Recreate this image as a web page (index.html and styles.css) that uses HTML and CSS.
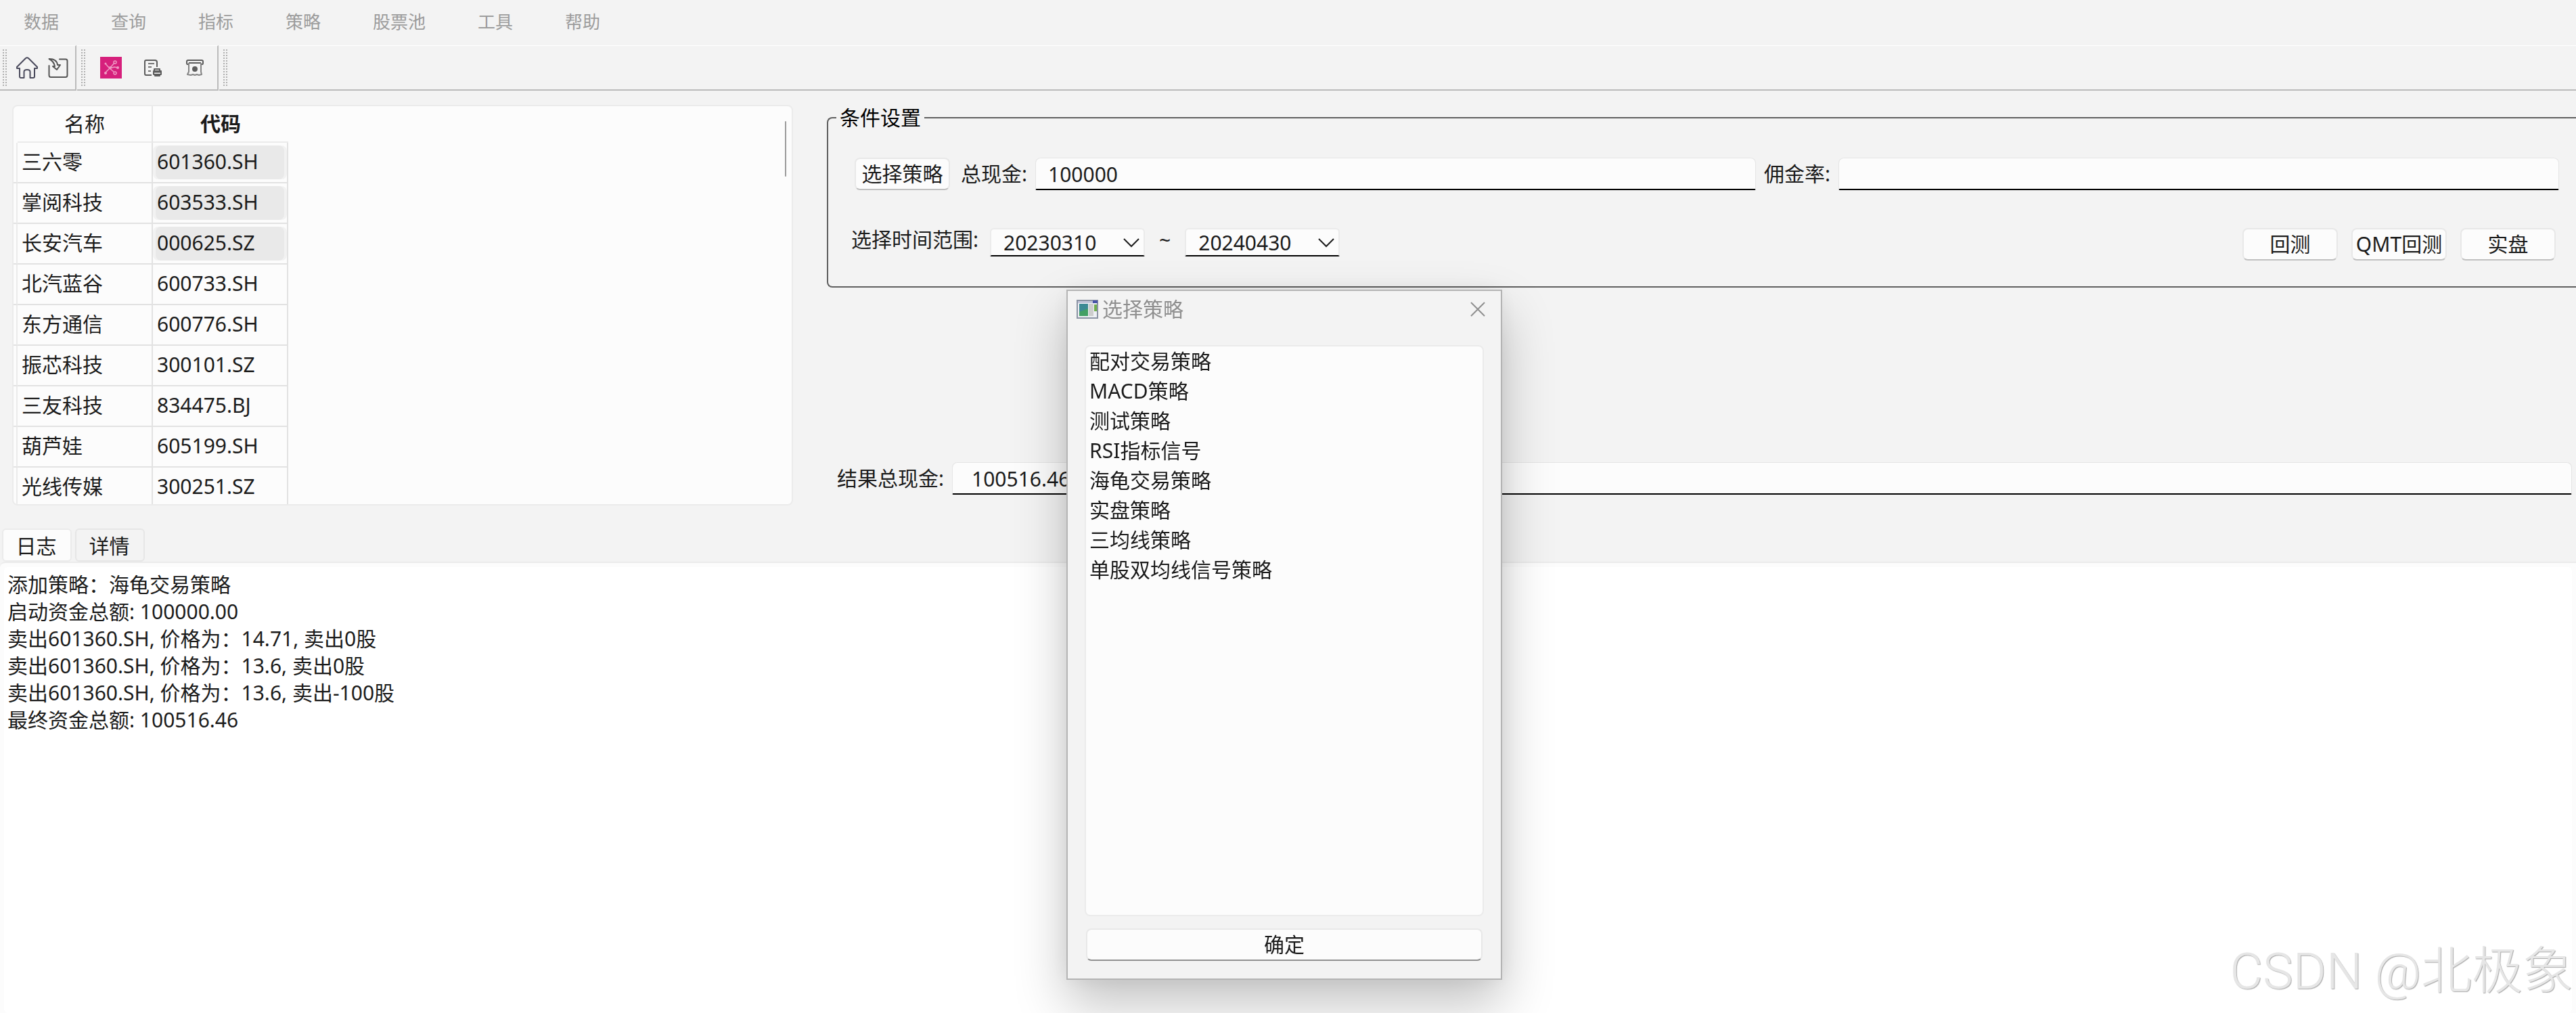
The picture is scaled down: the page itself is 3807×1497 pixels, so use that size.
FILE: index.html
```html
<!DOCTYPE html>
<html lang="zh-CN">
<head>
    <meta charset="UTF-8">
    <meta name="viewport" content="width=device-width, initial-scale=1.0">
    <title>选择策略</title>
    <link rel="stylesheet" href="styles.css">
</head>
<body>
    <nav class="menubar">
        <a href="#">数据</a>
        <a href="#">查询</a>
        <a href="#">指标</a>
        <a href="#">策略</a>
        <a href="#">股票池</a>
        <a href="#">工具</a>
        <a href="#">帮助</a>
    </nav>

    <div class="toolbars">
        <div class="toolbar toolbar-home">
            <span class="handle"></span>
            <button class="tool" aria-label="主页">
                <svg viewBox="0 0 32 32" fill="none" stroke="#4a4a5c" stroke-width="2" stroke-linejoin="round">
                    <path d="M1 15 L14 2 Q16 0.500 18 2 L31 15 V17 H27 V29 Q27 31 25 31 H20.500 V22 Q20.500 19 16 19 Q11.500 19 11.500 22 V31 H7 Q5 31 5 29 V17 H1 Z"/>
                </svg>
            </button>
            <button class="tool" aria-label="导入">
                <svg viewBox="0 0 32 32" fill="none" stroke="#555" stroke-width="2" stroke-linejoin="round" stroke-linecap="round">
                    <path d="M18 3.500 H27 Q29.500 3.500 29.500 6 V27 Q29.500 30 27 30 H5 Q2.500 30 2.500 27 V13"/>
                    <path d="M2.500 3 Q14 3 15 12 H19 L14 19 L8 14 H11 Q10 7 2.500 3 Z"/>
                </svg>
            </button>
        </div>
        <div class="toolbar toolbar-strategy">
            <span class="handle"></span>
            <button class="tool" aria-label="策略网络">
                <svg viewBox="0 0 32 32">
                    <rect width="32" height="32" fill="#d6207c"/>
                    <g stroke="#ef9cc5" stroke-width="1.500" fill="none">
                        <path d="M8 23 L14 17 L8.500 11 M14 17 L21 9 M14 17 L21 15 L26 16 M14 17 L20 22"/>
                        <circle cx="22" cy="8" r="2"/>
                        <circle cx="22" cy="24" r="2"/>
                    </g>
                    <g fill="#ef9cc5">
                        <circle cx="8" cy="24" r="2"/>
                        <circle cx="8" cy="10" r="1.500"/>
                        <circle cx="26" cy="16" r="2"/>
                        <circle cx="15" cy="16" r="2"/>
                    </g>
                </svg>
            </button>
            <button class="tool" aria-label="打印单据">
                <svg viewBox="0 0 32 32" fill="none" stroke="#5c5c5c" stroke-width="2" stroke-linejoin="round">
                    <path d="M14 27 H6 Q4 27 4 25 V7 Q4 5 6 5 H19 Q22 5 22 8 V15"/>
                    <path d="M9 10 H18 M9 15 H14 M9 21 H13" stroke="#757575"/>
                    <path d="M18 20 V18 H26 V20 M17 21 H28 V26 H17 Z M19 26 H26 V28 H19 Z"/>
                    <path d="M17 22 H28" stroke-width="3"/>
                </svg>
            </button>
            <button class="tool" aria-label="取款">
                <svg viewBox="0 0 32 32" fill="none" stroke="#5c5c5c" stroke-width="2" stroke-linejoin="round">
                    <path d="M7 11 H5 Q4 11 4 9 V7 Q4 5 6 5 H26 Q28 5 28 7 V9 Q28 11 27 11 H25"/>
                    <path d="M7 9 H25"/>
                    <path d="M7 9 V22 L5 26 L10 27 L13 26 L16 27 L19 26 L22 27 L26 26 L25 22 V9" stroke="#858585"/>
                    <circle cx="16" cy="18" r="3" fill="#5c5c5c"/>
                </svg>
            </button>
        </div>
        <div class="toolbar toolbar-empty">
            <span class="handle"></span>
        </div>
    </div>

    <main class="workspace">
        <section class="stocks">
            <table>
                <thead>
                    <tr><th class="stub"></th><th class="name">名称</th><th class="current">代码</th></tr>
                </thead>
                <tbody>
                    <tr><td class="stub"></td><td>三六零</td><td class="selected"><span>601360.SH</span></td></tr>
                    <tr><td class="stub"></td><td>掌阅科技</td><td class="selected"><span>603533.SH</span></td></tr>
                    <tr><td class="stub"></td><td>长安汽车</td><td class="selected"><span>000625.SZ</span></td></tr>
                    <tr><td class="stub"></td><td>北汽蓝谷</td><td>600733.SH</td></tr>
                    <tr><td class="stub"></td><td>东方通信</td><td>600776.SH</td></tr>
                    <tr><td class="stub"></td><td>振芯科技</td><td>300101.SZ</td></tr>
                    <tr><td class="stub"></td><td>三友科技</td><td>834475.BJ</td></tr>
                    <tr><td class="stub"></td><td>葫芦娃</td><td>605199.SH</td></tr>
                    <tr><td class="stub"></td><td>光线传媒</td><td>300251.SZ</td></tr>
                </tbody>
            </table>
            <div class="scroll-thumb"></div>
        </section>

        <section class="backtest">
            <fieldset>
                <legend>条件设置</legend>
                <div class="row row-cash">
                    <button class="btn">选择策略</button>
                    <label for="cash">总现金:</label>
                    <input type="text" id="cash" value="100000">
                    <label for="fee">佣金率:</label>
                    <input type="text" id="fee">
                </div>
                <div class="row row-range">
                    <label for="start">选择时间范围:</label>
                    <div class="combo">
                        <select id="start"><option>20230310</option></select>
                        <svg viewBox="0 0 24 14"><path d="M1 1 L12 12 L23 1" fill="none" stroke="#1b1b1b" stroke-width="2"/></svg>
                    </div>
                    <span class="tilde">~</span>
                    <div class="combo">
                        <select id="end" aria-label="结束时间"><option>20240430</option></select>
                        <svg viewBox="0 0 24 14"><path d="M1 1 L12 12 L23 1" fill="none" stroke="#1b1b1b" stroke-width="2"/></svg>
                    </div>
                    <div class="actions">
                        <button class="btn">回测</button>
                        <button class="btn">QMT回测</button>
                        <button class="btn">实盘</button>
                    </div>
                </div>
            </fieldset>
            <div class="row row-result">
                <label for="result">结果总现金:</label>
                <input type="text" id="result" value="100516.46">
            </div>
        </section>
    </main>

    <div class="tabs" role="tablist">
        <button class="tab active" role="tab">日志</button>
        <button class="tab" role="tab">详情</button>
    </div>
    <section class="log-pane">
        <div class="log">
            <p>添加策略：海龟交易策略</p>
            <p>启动资金总额: 100000.00</p>
            <p>卖出601360.SH, 价格为：14.71, 卖出0股</p>
            <p>卖出601360.SH, 价格为：13.6, 卖出0股</p>
            <p>卖出601360.SH, 价格为：13.6, 卖出-100股</p>
            <p>最终资金总额: 100516.46</p>
        </div>
    </section>

    <div class="dialog" role="dialog" aria-labelledby="dialog-title">
        <div class="titlebar">
            <svg class="app-icon" viewBox="0 0 32 28">
                <rect x="1" y="1" width="30" height="26" fill="#eef0f4" stroke="#8b93a3" stroke-width="2"/>
                <rect x="2" y="2" width="22" height="3" fill="#c4c6da"/>
                <rect x="24" y="1" width="7" height="4" fill="#4854a8"/>
                <rect x="4" y="6" width="13" height="18" fill="#3d8a94"/>
                <path d="M4 24 V18 L17 13 V24 Z" fill="#43a064"/>
                <rect x="18" y="6" width="7" height="18" fill="#cdcdcd"/>
                <rect x="26" y="7" width="4" height="10" fill="#6fae4e"/>
            </svg>
            <h2 id="dialog-title">选择策略</h2>
            <button class="close" aria-label="关闭">
                <svg viewBox="0 0 22 22"><path d="M1 1 L21 21 M21 1 L1 21" stroke="#8f8f8f" stroke-width="2"/></svg>
            </button>
        </div>
        <ul class="strategies">
            <li>配对交易策略</li>
            <li>MACD策略</li>
            <li>测试策略</li>
            <li>RSI指标信号</li>
            <li>海龟交易策略</li>
            <li>实盘策略</li>
            <li>三均线策略</li>
            <li>单股双均线信号策略</li>
        </ul>
        <button class="btn confirm">确定</button>
    </div>

    <div class="watermark">CSDN @北极象</div>
</body>
</html>
```

FILE: styles.css
```css
* { box-sizing: border-box; }
body { margin: 0; min-height: 100vh; display: flex; flex-direction: column; overflow: hidden; background: #f3f3f3; color: #1b1b1b; font-family: "Noto Sans", "Noto Sans CJK SC", sans-serif; font-size: 30px; line-height: 40px; }
button, input, select { font: inherit; color: inherit; margin: 0; }
label { white-space: nowrap; }

/* menu and toolbars */
.menubar { display: flex; gap: 77px; height: 67px; padding: 12px 35px 0; }
.menubar a { color: #9c9c9c; font-size: 26px; text-decoration: none; }
.toolbars { display: flex; height: 67px; }
.toolbar { display: flex; align-items: center; border-top: 1px solid #fff; border-bottom: 2px solid #bbb; border-right: 2px solid #bbb; padding-left: 4px; margin-right: 1px; }
.toolbar-home { width: 113px; }
.toolbar-strategy { width: 209px; padding-left: 6px; }
.toolbar-empty { flex: 1; margin-right: 0; border-right: none; padding-left: 6px; }
.handle { width: 6px; height: 54px; background: radial-gradient(circle at 1px 1px, #b0b0b0 1px, transparent 1px) 0 0 / 4px 4px; }
.tool { width: 32px; height: 32px; padding: 0; border: none; background: none; cursor: pointer; }
.tool svg { display: block; width: 32px; height: 32px; }
.toolbar-home .tool { margin-left: 14px; }
.toolbar-strategy .tool { margin-left: 20px; }
.toolbar-strategy .handle + .tool { margin-left: 22px; }
.toolbar-strategy .tool + .tool { margin-left: 30px; }

/* stock list */
.workspace { display: grid; grid-template-columns: 100fr 224fr; gap: 50px; padding: 21px 0 0 18px; }
.stocks { position: relative; height: 592px; overflow: hidden; background: #fcfcfc; border: 2px solid #ebebeb; border-radius: 8px; }
.stocks table { width: 406px; table-layout: fixed; border-collapse: separate; border-spacing: 0; }
.stocks th { height: 54px; padding: 0; border-bottom: 2px solid #ebebeb; font-weight: normal; }
.stocks th.name { width: 200px; border-right: 2px solid #e6e6e6; }
.stocks th.current { width: 200px; font-weight: bold; }
.stocks th.stub { width: 6px; border: none; }
.stocks td { height: 60px; padding: 0 0 2px 6px; border-right: 2px solid #e2e2e2; border-bottom: 2px solid #e2e2e2; }
.stocks td.stub { padding: 0; border-right-color: #ebebeb; }
.stocks td.selected { padding: 0 4px; }
.selected span { display: block; height: 50px; line-height: 48px; padding-left: 2px; background: #e9e9e9; border-radius: 8px; box-shadow: -4px 0 0 #f2f2f2, 4px 0 0 #f2f2f2; }
.scroll-thumb { position: absolute; top: 22px; right: 8px; width: 2px; height: 82px; background: #9b9b9b; border-radius: 1px; }

/* backtest form */
fieldset { min-width: 0; margin: 0; padding: 40px 25px 38px 12px; border: 2px solid #5f5f5f; border-right: none; border-radius: 8px 0 0 8px; }
legend { padding: 0 5px; line-height: 38px; color: #000; }
.row { display: flex; }
.row-cash { align-items: center; gap: 12px; padding-left: 27px; }
.row-cash .btn { margin-right: 4px; }
.row-range { align-items: flex-start; margin-top: 56px; padding: 0 5px 0 22px; }
.row-range label { line-height: 34px; margin-right: 17px; }
.row-result { align-items: center; gap: 12px; margin-top: 258px; padding: 0 6px 0 15px; }
input { flex: 1; min-width: 0; height: 48px; padding: 2px 18px 0; background: #fcfcfc; border: 1px solid #e5e5e5; border-bottom: 2px solid #000; border-radius: 8px 8px 2px 2px; }
.row-result input { padding: 2px 28px 0; }
.btn { width: 141px; height: 48px; padding: 0; background: #fcfcfc; border: 2px solid #e8e8e8; border-bottom-color: #c0c0c0; border-radius: 8px; line-height: 44px; white-space: nowrap; cursor: pointer; }
.combo { position: relative; width: 229px; }
.combo select { display: block; width: 100%; height: 42px; padding: 0 18px; appearance: none; background: #fcfcfc; border: 2px solid #ebebeb; border-bottom-color: #000; border-radius: 6px 6px 2px 2px; }
.combo svg { position: absolute; right: 8px; top: 15px; width: 24px; height: 14px; }
.tilde { line-height: 36px; margin: 0 21px; }
.actions { display: flex; gap: 20px; margin-left: auto; }

/* log */
.tabs { display: flex; gap: 5px; margin-top: 34px; padding-left: 3px; }
.tab { width: 103px; height: 49px; padding: 2px 2px 0 0; background: #f3f3f3; border: 2px solid #e6e6e6; border-radius: 6px; cursor: pointer; }
.tab.active { background: #fcfcfc; border-color: #ebebeb; }
.log-pane { flex: 1; padding: 6px 6px 0; background: #fcfcfc; border-top: 2px solid #ebebeb; border-radius: 8px 0 0 0; display: flex; }
.log { flex: 1; padding: 6px 6px 6px 5px; background: #fff; border-radius: 6px; }
.log p { margin: 0; }

/* strategy dialog */
.dialog { position: fixed; left: 41.4%; top: 428px; width: 644px; padding: 0 25px 26px; background: #f3f3f3; border: 2px solid #b4b4b4; box-shadow: 0 36px 72px rgba(0, 0, 0, 0.24), 0 0 30px rgba(0, 0, 0, 0.06); }
.titlebar { display: flex; align-items: center; height: 54px; margin: 0 -12px 26px; color: #8f8f8f; }
.titlebar h2 { flex: 1; margin: 0 0 0 6px; font-size: 30px; font-weight: normal; }
.app-icon { width: 32px; height: 28px; }
.close { width: 22px; height: 22px; margin-right: 10px; padding: 0; border: none; background: none; cursor: pointer; }
.close svg { display: block; }
.strategies { height: 844px; margin: 0; padding: 0 5px; list-style: none; background: #fcfcfc; border: 2px solid #ebebeb; border-radius: 8px; }
.strategies li { line-height: 44px; }
.confirm { display: block; width: calc(100% - 4px); margin: 18px 2px 0; border-bottom-color: #909090; }

.watermark { position: fixed; right: 4px; bottom: 12px; font-family: Roboto, "Noto Sans CJK SC", sans-serif; font-size: 75px; font-weight: 300; line-height: 100px; color: #e6e6e6; text-shadow: 1px 1px 1px #aaa; }
```
